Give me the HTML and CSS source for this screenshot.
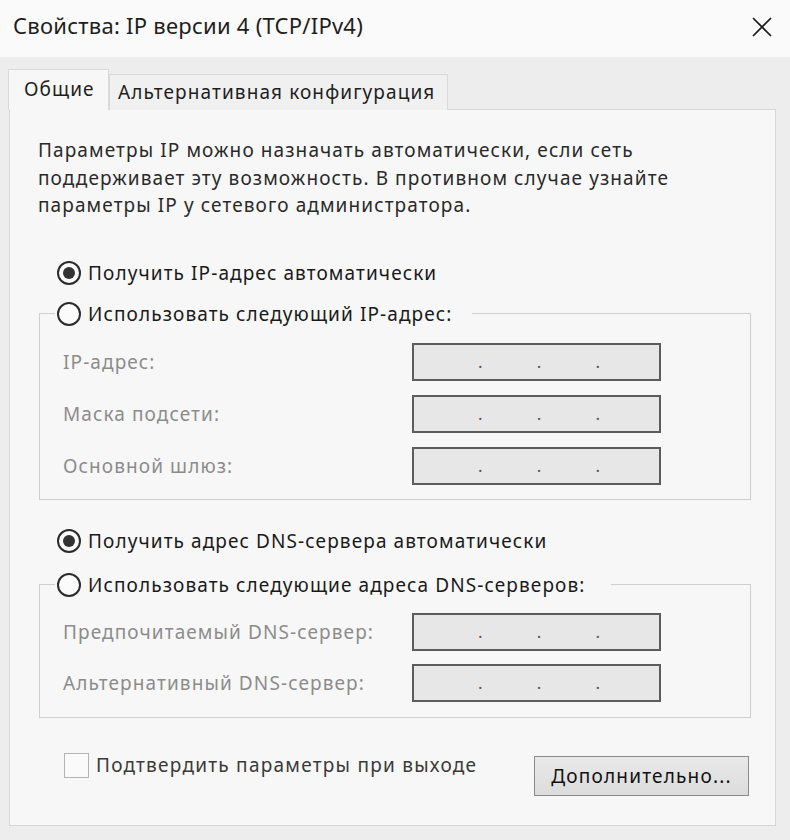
FILE: index.html
```html
<!DOCTYPE html>
<html lang="ru">
<head>
  <meta charset="UTF-8">
  <meta name="viewport" content="width=device-width, initial-scale=1.0">
  <link rel="stylesheet" href="styles.css">
</head>
<body>
  <div class="window">
    <!-- Заголовок окна -->
    <div class="titlebar">
      <span class="title">Свойства: IP версии 4 (TCP/IPv4)</span>
      <svg class="close" width="20" height="20" viewBox="0 0 20 20" aria-label="Закрыть">
        <path d="M1 1 L19 19 M19 1 L1 19" stroke="#1a1a1a" stroke-width="1.7" fill="none"/>
      </svg>
    </div>

    <div class="client">
      <!-- Вкладки -->
      <div class="tabs">
        <div class="tab active">Общие</div>
        <div class="tab">Альтернативная конфигурация</div>
      </div>

      <div class="panel">
        <p class="intro">Параметры IP можно назначать автоматически, если сеть<br>поддерживает эту возможность. В противном случае узнайте<br>параметры IP у сетевого администратора.</p>

        <div class="radio-row first"><span class="radio checked"></span>Получить IP-адрес автоматически</div>

        <fieldset class="group group-ip">
          <legend class="radio-row"><span class="radio"></span>Использовать следующий IP-адрес:</legend>
          <div class="field-row"><span class="field-label">IP-адрес:</span><span class="ip-box"><i>.</i><i>.</i><i>.</i></span></div>
          <div class="field-row"><span class="field-label">Маска подсети:</span><span class="ip-box"><i>.</i><i>.</i><i>.</i></span></div>
          <div class="field-row"><span class="field-label">Основной шлюз:</span><span class="ip-box"><i>.</i><i>.</i><i>.</i></span></div>
        </fieldset>

        <div class="radio-row dns"><span class="radio checked"></span>Получить адрес DNS-сервера автоматически</div>

        <fieldset class="group group-dns">
          <legend class="radio-row"><span class="radio"></span>Использовать следующие адреса DNS-серверов:</legend>
          <div class="field-row"><span class="field-label">Предпочитаемый DNS-сервер:</span><span class="ip-box"><i>.</i><i>.</i><i>.</i></span></div>
          <div class="field-row"><span class="field-label">Альтернативный DNS-сервер:</span><span class="ip-box"><i>.</i><i>.</i><i>.</i></span></div>
        </fieldset>

        <div class="footer">
          <label class="check-row"><span class="checkbox"></span>Подтвердить параметры при выходе</label>
          <button class="btn">Дополнительно...</button>
        </div>
      </div>
    </div>
  </div>
</body>
</html>
```

FILE: styles.css
```css
/* База */
* {
  margin: 0;
  padding: 0;
  box-sizing: border-box;
}

body {
  font-family: "Noto Sans", "Open Sans", sans-serif;
  font-size: 19px;
  letter-spacing: 1.1px;
  color: #222;
  background: #ededed;
}

.window {
  width: 790px;
  height: 840px;
  background: #ededed;
  overflow: hidden;
}

/* Заголовок */
.titlebar {
  height: 57px;
  background: #fafafa;
  display: flex;
  align-items: center;
  justify-content: space-between;
  padding: 0 18px 8px 13px;
}

.title {
  font-size: 22px;
  letter-spacing: 0.25px;
  color: #1e1e1e;
}

.close {
  display: block;
  margin-top: 4px;
}

/* Клиентская область */
.client {
  padding: 13px 14px 0 9px;
}

.tabs {
  display: flex;
  align-items: flex-end;
  height: 40px;
  margin-bottom: -1px;
  position: relative;
  z-index: 1;
}

.tab {
  height: 36px;
  padding: 4px 12px 0 8px;
  border: 1px solid #d9d9d9;
  border-bottom: none;
  background: #f0f0f0;
  color: #1e1e1e;
  white-space: nowrap;
}

.tab.active {
  height: 41px;
  width: 101px;
  margin-left: -1px;
  padding: 6px 0 0 15px;
  background: #f7f7f7;
}

.panel {
  height: 717px;
  border: 1px solid #d6d6d6;
  background: #f7f7f7;
  padding: 0 24px 0 28px;
}

.intro {
  margin-top: 27px;
  line-height: 27.5px;
  color: #2a2a2a;
}

/* Переключатели */
.radio-row {
  display: flex;
  align-items: center;
  height: 26px;
  white-space: nowrap;
  color: #1a1a1a;
}

.radio-row.first {
  margin: 40px 0 0 19px;
}

.radio-row.dns {
  margin: 28px 0 0 19px;
}

.radio {
  width: 24px;
  height: 24px;
  border: 2px solid #2b2b2b;
  border-radius: 50%;
  background: #fbfbfb;
  margin-right: 7px;
  display: flex;
  align-items: center;
  justify-content: center;
  flex-shrink: 0;
}

.radio.checked::after {
  content: "";
  width: 12px;
  height: 12px;
  border-radius: 50%;
  background: #333;
}

/* Группы */
.group {
  margin-left: 1px;
  width: 712px;
  border: 1px solid #cfcfcf;
  padding: 16px 0 14px 15px;
}

.group legend {
  padding: 0 20px 0 2px;
}

.group-ip {
  margin-top: 15px;
}

.group-dns {
  margin-top: 18px;
  padding-top: 15px;
  padding-bottom: 15px;
}

.group-dns legend {
  padding-right: 26px;
}

.field-row {
  display: flex;
  align-items: center;
  padding-left: 8px;
}

.field-row + .field-row {
  margin-top: 14px;
}

.group-dns .field-row + .field-row {
  margin-top: 13px;
}

.field-label {
  width: 349px;
  color: #8c8c8c;
}

.ip-box {
  width: 249px;
  height: 38px;
  border: 2px solid #5c5c5c;
  background: #e7e7e7;
  display: flex;
  justify-content: space-between;
  padding: 0 59px 0 64px;
  line-height: 34px;
  letter-spacing: 0;
  color: #555;
}

.ip-box i {
  font-style: normal;
  font-size: 17px;
}

/* Нижняя строка */
.footer {
  display: flex;
  justify-content: space-between;
  align-items: flex-start;
  margin-top: 35px;
  padding-left: 26px;
  padding-right: 2px;
}

.check-row {
  display: flex;
  align-items: center;
  height: 25px;
  letter-spacing: 1.25px;
  color: #3a3a3a;
}

.checkbox {
  width: 25px;
  height: 25px;
  border: 1.5px solid #b3b3b3;
  background: #fafafa;
  margin-right: 7px;
}

.btn {
  margin-top: 3px;
  width: 215px;
  height: 40px;
  border: 1.5px solid #8a8a8a;
  background: linear-gradient(#e9e9e9, #dcdcdc);
  font-family: inherit;
  font-size: 19px;
  letter-spacing: 1.2px;
  color: #111;
}
```
